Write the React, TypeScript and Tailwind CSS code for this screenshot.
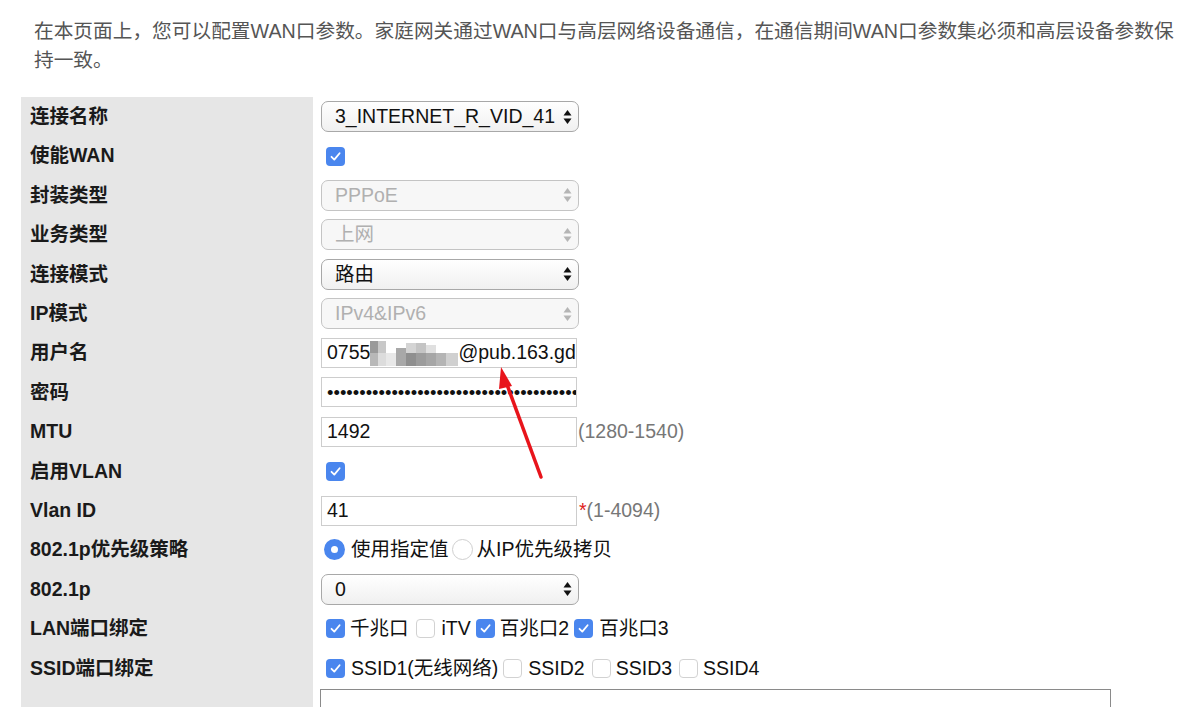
import React from "react";

const FONT = { fontFamily: '"Liberation Sans", "Noto Sans CJK SC", sans-serif' };

function Arrows({ disabled }: { disabled?: boolean }) {
  const c = disabled ? "#b5b5b5" : "#111";
  return (
    <svg width="9" height="16" viewBox="0 0 9 16" className="shrink-0">
      <path d="M4.5 1 L8.5 6.5 L0.5 6.5 Z" fill={c} />
      <path d="M4.5 15 L8.5 9.5 L0.5 9.5 Z" fill={c} />
    </svg>
  );
}

function Select({ value, disabled }: { value: string; disabled?: boolean }) {
  return (
    <div
      className={`flex h-[31px] w-[258px] items-center justify-between rounded-[7px] border pl-[13px] pr-[6px] ${
        disabled
          ? "border-[#c4c4c4] bg-[#f7f7f7] text-[#b0b0b0]"
          : "border-[#a8a8a8] bg-gradient-to-b from-white to-[#f0f0f0] text-[#111]"
      }`}
    >
      <span className="whitespace-nowrap overflow-hidden">{value}</span>
      <Arrows disabled={disabled} />
    </div>
  );
}

function Input({ children }: { children: React.ReactNode }) {
  return (
    <div className="flex h-[30px] w-[256px] items-center overflow-hidden whitespace-nowrap border border-[#cdcdcd] bg-white pl-[5px] text-[#111]">
      {children}
    </div>
  );
}

function Check({ on }: { on: boolean }) {
  return on ? (
    <span className="flex h-[19px] w-[19px] shrink-0 items-center justify-center rounded-[4px] bg-[#4a86ee]">
      <svg width="13" height="13" viewBox="0 0 13 13">
        <path d="M2.5 6.8 L5.3 9.6 L10.6 3.2" stroke="#fff" strokeWidth="1.8" fill="none" strokeLinecap="round" strokeLinejoin="round" />
      </svg>
    </span>
  ) : (
    <span className="h-[19px] w-[19px] shrink-0 rounded-[4px] border border-[#d2d2d2] bg-white" />
  );
}

function Radio({ on }: { on: boolean }) {
  return on ? (
    <span className="flex h-[21px] w-[21px] shrink-0 items-center justify-center rounded-full bg-[#4a86ee]">
      <span className="h-[7px] w-[7px] rounded-full bg-white" />
    </span>
  ) : (
    <span className="h-[21px] w-[21px] shrink-0 rounded-full border border-[#cfcfcf] bg-white" />
  );
}

function Row({ label, children }: { label: string; children?: React.ReactNode }) {
  return (
    <div className="flex h-[39.4px]">
      <div className="flex w-[292px] shrink-0 items-center bg-[#e6e6e6] pl-[9px] font-bold text-[#1a1a1a]">
        {label}
      </div>
      <div className="flex items-center pl-[8px]">{children}</div>
    </div>
  );
}

function Blur() {
  const tiles = [
    [0, 0, 8, 12, "#9a9a9a"], [8, 0, 8, 12, "#c8c8c8"], [0, 12, 8, 13, "#b8b8b8"], [8, 12, 8, 13, "#dcdcdc"],
    [16, 12, 10, 13, "#e8e8e8"], [26, 7, 10, 18, "#a8a8a8"], [36, 2, 10, 10, "#d4d4d4"], [36, 12, 10, 13, "#8f8f8f"],
    [46, 2, 10, 10, "#c4c4c4"], [46, 12, 10, 13, "#9c9c9c"], [56, 4, 10, 8, "#e0e0e0"], [56, 12, 10, 13, "#a6a6a6"],
    [66, 12, 10, 13, "#b4b4b4"], [76, 12, 12, 13, "#d0d0d0"],
  ] as const;
  return (
    <svg width="88" height="25" viewBox="0 0 88 25" className="shrink-0">
      {tiles.map(([x, y, w, h, c], i) => (
        <rect key={i} x={x} y={y} width={w} height={h} fill={c} />
      ))}
    </svg>
  );
}

export default function App() {
  return (
    <div className="relative h-[707px] overflow-hidden bg-white text-[19.5px]" style={FONT}>
      <p className="pl-[34px] pr-[16px] pt-[17px] text-[19.7px] leading-[29px] text-[#555]">
        在本页面上，您可以配置WAN口参数。家庭网关通过WAN口与高层网络设备通信，在通信期间WAN口参数集必须和高层设备参数保持一致。
      </p>

      <div className="ml-[21px] mt-[22px] flex flex-col">
        <Row label="连接名称">
          <Select value="3_INTERNET_R_VID_41" />
        </Row>
        <Row label="使能WAN">
          <span className="pl-[5px]">
            <Check on />
          </span>
        </Row>
        <Row label="封装类型">
          <Select value="PPPoE" disabled />
        </Row>
        <Row label="业务类型">
          <Select value="上网" disabled />
        </Row>
        <Row label="连接模式">
          <Select value="路由" />
        </Row>
        <Row label="IP模式">
          <Select value="IPv4&IPv6" disabled />
        </Row>
        <Row label="用户名">
          <Input>
            <span>0755</span>
            <Blur />
            <span>@pub.163.gd</span>
          </Input>
        </Row>
        <Row label="密码">
          <Input>
            <span className="text-[18.4px]">{"•".repeat(39)}</span>
          </Input>
        </Row>
        <Row label="MTU">
          <Input>1492</Input>
          <span className="pl-[1px] text-[#777]">(1280-1540)</span>
        </Row>
        <Row label="启用VLAN">
          <span className="pl-[5px]">
            <Check on />
          </span>
        </Row>
        <Row label="Vlan ID">
          <Input>41</Input>
          <span className="pl-[2px] text-[#777]">
            <span className="text-[#e02020]">*</span>(1-4094)
          </span>
        </Row>
        <Row label="802.1p优先级策略">
          <div className="flex items-center pl-[3px] text-[#111]">
            <Radio on />
            <span className="pl-[6px] pr-[3px]">使用指定值</span>
            <Radio on={false} />
            <span className="pl-[4px]">从IP优先级拷贝</span>
          </div>
        </Row>
        <Row label="802.1p">
          <Select value="0" />
        </Row>
        <Row label="LAN端口绑定">
          <div className="flex items-center pl-[5px] text-[#111]">
            <Check on />
            <span className="pl-[5px] pr-[7px]">千兆口</span>
            <Check on={false} />
            <span className="pl-[7px] pr-[5px]">iTV</span>
            <Check on />
            <span className="pl-[5px] pr-[5px]">百兆口2</span>
            <Check on />
            <span className="pl-[6px]">百兆口3</span>
          </div>
        </Row>
        <Row label="SSID端口绑定">
          <div className="flex items-center pl-[5px] text-[#111]">
            <Check on />
            <span className="pl-[6px] pr-[5px]">SSID1(无线网络)</span>
            <Check on={false} />
            <span className="pl-[6px] pr-[7px]">SSID2</span>
            <Check on={false} />
            <span className="pl-[5px] pr-[7px]">SSID3</span>
            <Check on={false} />
            <span className="pl-[5px]">SSID4</span>
          </div>
        </Row>
        <div className="flex h-[40px]">
          <div className="w-[292px] shrink-0 bg-[#e6e6e6]" />
          <div className="flex-1 pl-[7px] pt-[1px]">
            <div className="h-[60px] w-[791px] border border-[#8a8a8a] bg-white" />
          </div>
        </div>
      </div>

      <svg
        className="pointer-events-none absolute left-0 top-0"
        width="1200"
        height="707"
        viewBox="0 0 1200 707"
      >
        <line x1="541" y1="477" x2="506" y2="382" stroke="#e8141b" strokeWidth="3.5" strokeLinecap="round" />
        <path d="M501 367 L512 386 L499 389 Z" fill="#e8141b" />
      </svg>
    </div>
  );
}
